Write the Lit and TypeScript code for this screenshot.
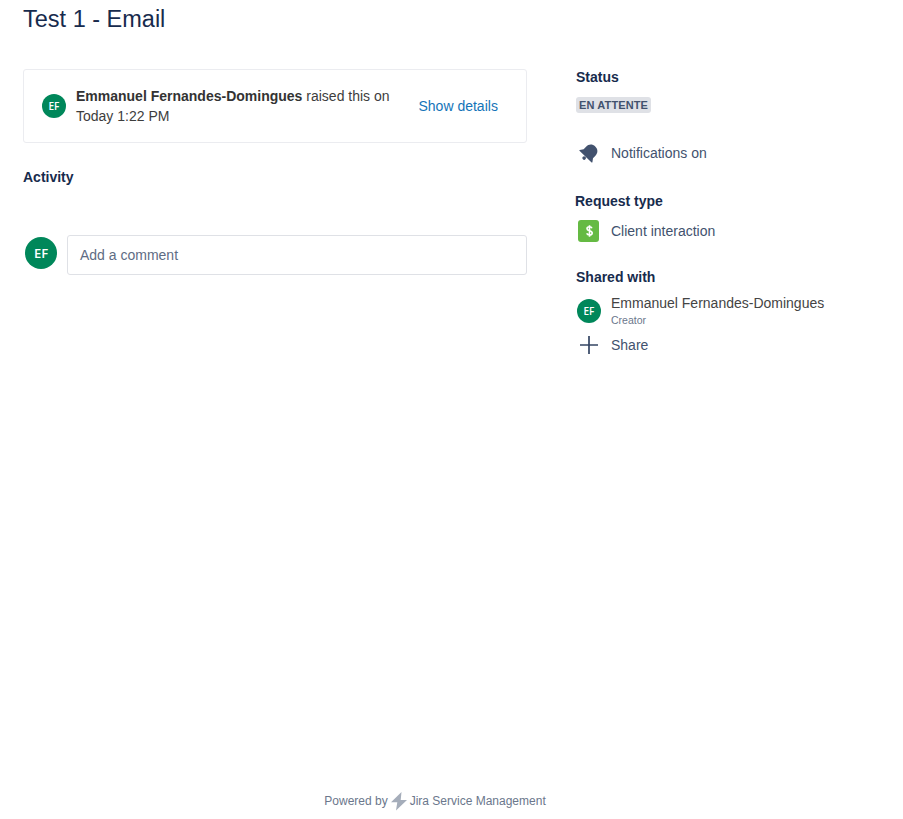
import { LitElement, html, css } from "lit";
import { customElement } from "lit/decorators.js";

@customElement("app-root")
export class AppRoot extends LitElement {
  static styles = css`
    :host { display: flex; flex-direction: column; height: 819px; font-family: "Liberation Sans", Arial, sans-serif; font-size: 14px; color: #333; background: #fff; box-sizing: border-box; }
    .main { flex: 1; display: flex; padding: 0 0 0 23px; }
    .left { width: 504px; display: flex; flex-direction: column; }
    h1 { margin: 0; font-weight: 400; font-size: 23.5px; line-height: 28px; height: 28px; padding-top: 5px; color: #172b4d; }
    .card { margin-top: 36px; height: 74px; box-sizing: border-box; border: 1px solid #ebecf0; border-radius: 3px; display: flex; align-items: center; padding: 0 18px; }
    .avatar { border-radius: 50%; background: #00875a; color: #fff; display: flex; align-items: center; justify-content: center; font-family: "Open Sans", sans-serif; font-weight: 600; flex: none; }
    .a24 { width: 24px; height: 24px; font-size: 10px; }
    .a32 { width: 32px; height: 32px; font-size: 13px; }
    .raised { margin-left: 10px; width: 330px; line-height: 20px; color: #3d3d3d; }
    .raised b { font-weight: 700; color: #333; }
    .show { color: #1474b8; margin-left: 12.5px; white-space: nowrap; }
    .head { font-weight: 700; color: #172b4d; line-height: 18px; }
    .activity { margin-top: 25px; }
    .comment { margin-top: 49px; display: flex; align-items: flex-start; padding-left: 2px; }
    .input { margin-left: 10px; flex: 1; height: 40px; box-sizing: border-box; border: 1px solid #dfe1e6; border-radius: 3px; padding: 0 12px; display: flex; align-items: center; color: #5e6c84; }
    .comment .a32 { margin-top: 2px; }
    .right { margin-left: 49px; width: 300px; display: flex; flex-direction: column; padding-top: 68px; }
    .lozenge { align-self: flex-start; margin-top: 11px; background: #dfe1e6; color: #42526e; font-size: 11px; font-weight: 700; line-height: 16px; padding: 0 3px; border-radius: 3px; letter-spacing: 0.12px; }
    .row { display: flex; align-items: center; color: #42526e; }
    .icon { width: 35px; flex: none; display: flex; padding-left: 1px; box-sizing: border-box; }
    .notif { margin-top: 28px; height: 24px; }
    .rt { margin-top: 27px; margin-left: -1px; }
    .type { margin-top: 9px; height: 24px; }
    .sw { margin-top: 25px; }
    .shared { margin-top: 7px; height: 34px; }
    .shared .avatar { margin-top: 2px; }
    .name { color: #444; line-height: 18px; }
    .sub { font-size: 10.5px; color: #6b778c; line-height: 14px; margin-top: 1px; }
    .share { margin-top: 6px; height: 24px; }
    .foot { height: 28px; flex: none; display: flex; align-items: flex-start; justify-content: center; font-size: 12px; color: #6b778c; line-height: 20px; padding-right: 33px; gap: 2px; }
  `;

  render() {
    return html`
      <div class="main">
        <div class="left">
          <h1>Test 1 - Email</h1>
          <div class="card">
            <div class="avatar a24">EF</div>
            <div class="raised"><b>Emmanuel Fernandes-Domingues</b> raised this on Today 1:22 PM</div>
            <div class="show">Show details</div>
          </div>
          <div class="head activity">Activity</div>
          <div class="comment">
            <div class="avatar a32">EF</div>
            <div class="input">Add a comment</div>
          </div>
        </div>
        <div class="right">
          <div class="head">Status</div>
          <div class="lozenge">EN ATTENTE</div>
          <div class="row notif">
            <div class="icon">
              <svg width="24" height="24" viewBox="0 0 24 24"><g transform="rotate(44 12 12)" fill="#42526e"><path d="M12 3c4.300 0 6.500 2.900 6.500 6.500V13l2.300 3.200c.3.400 0 .8-.4.800H3.600c-.4 0-.7-.4-.4-.8L5.500 13V9.500C5.500 5.900 7.700 3 12 3z"/><circle cx="12" cy="19" r="1.800"/></g></svg>
            </div>
            <span>Notifications on</span>
          </div>
          <div class="head rt">Request type</div>
          <div class="row type">
            <div class="icon">
              <svg width="24" height="24" viewBox="0 0 24 24"><rect x="1" y="1" width="21" height="22" rx="3" fill="#65ba43"/><path d="M15 9.200c-.4-.9-1.300-1.400-2.500-1.400-1.500 0-2.500.8-2.500 1.900 0 2.600 5.200 1.400 5.200 4.200 0 1.200-1.100 2-2.700 2-1.300 0-2.300-.5-2.800-1.500M12.500 6.200v11.600" fill="none" stroke="#fff" stroke-width="1.600"/></svg>
            </div>
            <span>Client interaction</span>
          </div>
          <div class="head sw">Shared with</div>
          <div class="row shared">
            <div class="icon"><div class="avatar a24">EF</div></div>
            <div>
              <div class="name">Emmanuel Fernandes-Domingues</div>
              <div class="sub">Creator</div>
            </div>
          </div>
          <div class="row share">
            <div class="icon">
              <svg width="24" height="24" viewBox="0 0 24 24"><path d="M12 3v18M3 12h18" stroke="#344563" stroke-width="1.700" fill="none"/></svg>
            </div>
            <span>Share</span>
          </div>
        </div>
      </div>
      <footer class="foot">
        <span>Powered by</span>
        <svg width="18" height="20" viewBox="0 0 18 20"><path fill="#a5adba" d="M11.500 1 1 11.200h6.300L6 19.500 17 9H10.700z"/></svg>
        <span>Jira Service Management</span>
      </footer>
    `;
  }
}
